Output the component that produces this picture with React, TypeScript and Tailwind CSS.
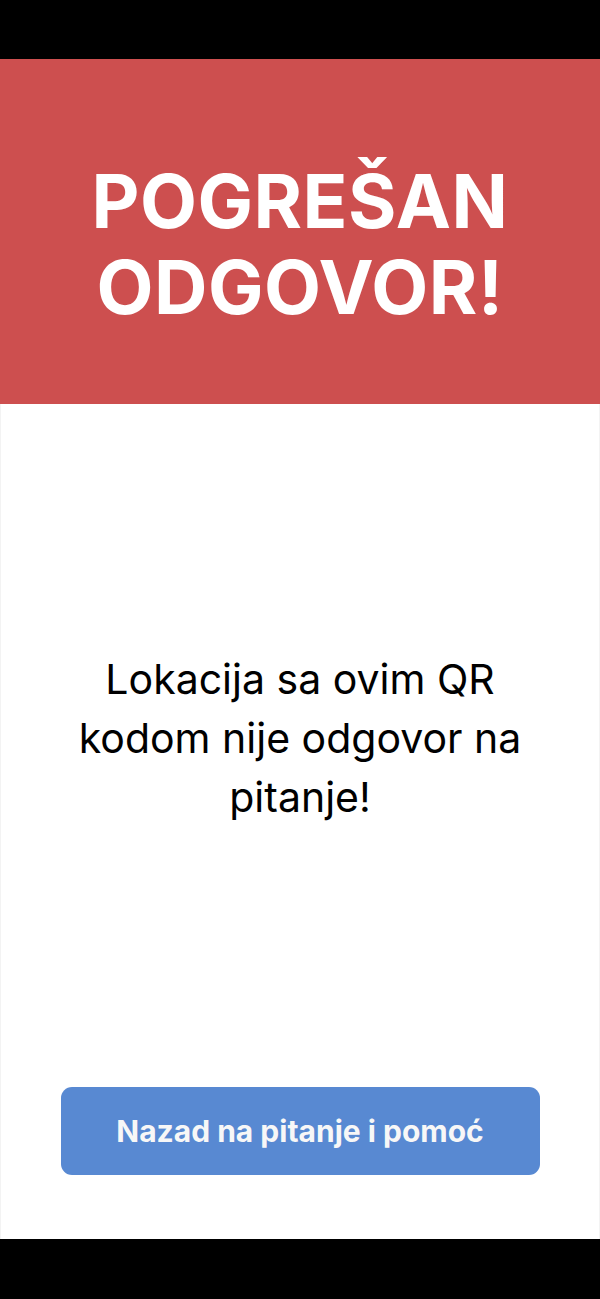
export default function App() {
  return (
    <div
      className="flex h-[1299px] w-[600px] flex-col bg-black"
      style={{ fontFamily: "Inter, 'Noto Sans', sans-serif" }}
    >
      <div className="h-[59px] shrink-0 bg-black" />

      <div className="h-[345px] shrink-0 bg-[#cd4f4f] pt-[99px] text-center">
        <h1 className="text-[74px] font-bold leading-[86px] tracking-[0.5px] text-white">
          POGREŠAN
          <br />
          ODGOVOR!
        </h1>
      </div>

      <div className="flex h-[835px] shrink-0 flex-col items-center border-x border-[#f3f3f3] bg-white">
        <p className="mt-[246px] w-[470px] text-center text-[41px] leading-[59px] text-black">
          Lokacija sa ovim QR kodom nije odgovor na pitanje!
        </p>
        <div className="flex-1" />
        <button className="mb-[64px] flex h-[88px] w-[479px] items-center justify-center rounded-[11px] bg-[#5889d2] text-[30px] font-bold text-[#f7f7f7]">
          Nazad na pitanje i pomoć
        </button>
      </div>

      <div className="flex-1 bg-black" />
    </div>
  );
}
